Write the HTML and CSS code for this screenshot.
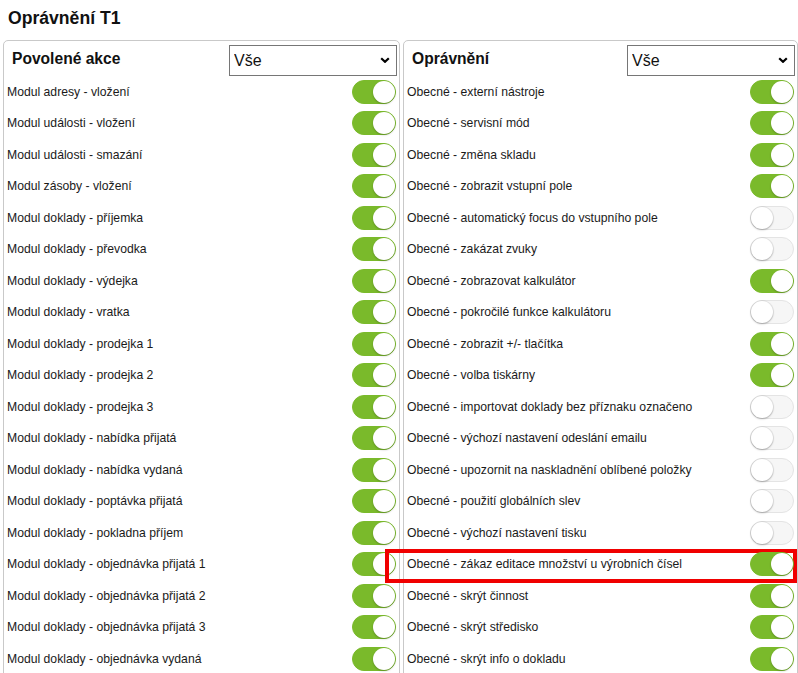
FILE: index.html
```html
<!DOCTYPE html>
<html lang="cs">
<head>
<meta charset="utf-8">
<title>Oprávnění T1</title>
<link rel="stylesheet" href="styles.css">
</head>
<body>
<h1 class="page-title">Oprávnění T1</h1>
<div class="panels">
  <section class="panel panel-left">
    <div class="panel-head">
      <h2 class="panel-title">Povolené akce</h2>
      <select class="filter"><option>Vše</option></select>
    </div>
    <div class="row"><span>Modul adresy - vložení</span><span class="sw on"></span></div>
    <div class="row"><span>Modul události - vložení</span><span class="sw on"></span></div>
    <div class="row"><span>Modul události - smazání</span><span class="sw on"></span></div>
    <div class="row"><span>Modul zásoby - vložení</span><span class="sw on"></span></div>
    <div class="row"><span>Modul doklady - příjemka</span><span class="sw on"></span></div>
    <div class="row"><span>Modul doklady - převodka</span><span class="sw on"></span></div>
    <div class="row"><span>Modul doklady - výdejka</span><span class="sw on"></span></div>
    <div class="row"><span>Modul doklady - vratka</span><span class="sw on"></span></div>
    <div class="row"><span>Modul doklady - prodejka 1</span><span class="sw on"></span></div>
    <div class="row"><span>Modul doklady - prodejka 2</span><span class="sw on"></span></div>
    <div class="row"><span>Modul doklady - prodejka 3</span><span class="sw on"></span></div>
    <div class="row"><span>Modul doklady - nabídka přijatá</span><span class="sw on"></span></div>
    <div class="row"><span>Modul doklady - nabídka vydaná</span><span class="sw on"></span></div>
    <div class="row"><span>Modul doklady - poptávka přijatá</span><span class="sw on"></span></div>
    <div class="row"><span>Modul doklady - pokladna příjem</span><span class="sw on"></span></div>
    <div class="row"><span>Modul doklady - objednávka přijatá 1</span><span class="sw on"></span></div>
    <div class="row"><span>Modul doklady - objednávka přijatá 2</span><span class="sw on"></span></div>
    <div class="row"><span>Modul doklady - objednávka přijatá 3</span><span class="sw on"></span></div>
    <div class="row"><span>Modul doklady - objednávka vydaná</span><span class="sw on"></span></div>
  </section>
  <section class="panel panel-right">
    <div class="panel-head">
      <h2 class="panel-title">Oprávnění</h2>
      <select class="filter"><option>Vše</option></select>
    </div>
    <div class="row"><span>Obecné - externí nástroje</span><span class="sw on"></span></div>
    <div class="row"><span>Obecné - servisní mód</span><span class="sw on"></span></div>
    <div class="row"><span>Obecné - změna skladu</span><span class="sw on"></span></div>
    <div class="row"><span>Obecné - zobrazit vstupní pole</span><span class="sw on"></span></div>
    <div class="row"><span>Obecné - automatický focus do vstupního pole</span><span class="sw"></span></div>
    <div class="row"><span>Obecné - zakázat zvuky</span><span class="sw"></span></div>
    <div class="row"><span>Obecné - zobrazovat kalkulátor</span><span class="sw on"></span></div>
    <div class="row"><span>Obecné - pokročilé funkce kalkulátoru</span><span class="sw"></span></div>
    <div class="row"><span>Obecné - zobrazit +/- tlačítka</span><span class="sw on"></span></div>
    <div class="row"><span>Obecné - volba tiskárny</span><span class="sw on"></span></div>
    <div class="row"><span>Obecné - importovat doklady bez příznaku označeno</span><span class="sw"></span></div>
    <div class="row"><span>Obecné - výchozí nastavení odeslání emailu</span><span class="sw"></span></div>
    <div class="row"><span>Obecné - upozornit na naskladnění oblíbené položky</span><span class="sw"></span></div>
    <div class="row"><span>Obecné - použití globálních slev</span><span class="sw"></span></div>
    <div class="row"><span>Obecné - výchozí nastavení tisku</span><span class="sw"></span></div>
    <div class="row highlighted"><span>Obecné - zákaz editace množství u výrobních čísel</span><span class="sw on"></span></div>
    <div class="row"><span>Obecné - skrýt činnost</span><span class="sw on"></span></div>
    <div class="row"><span>Obecné - skrýt středisko</span><span class="sw on"></span></div>
    <div class="row"><span>Obecné - skrýt info o dokladu</span><span class="sw on"></span></div>
  </section>
</div>
</body>
</html>
```

FILE: styles.css
```css
html, body {
  margin: 0;
  padding: 0;
  background: #ffffff;
  overflow: hidden;
}
body {
  font-family: "Liberation Sans", Arial, sans-serif;
  color: #1a1a1a;
}
.page-title {
  margin: 0;
  padding: 8px 8px 0 8px;
  height: 20px;
  line-height: 20px;
  font-size: 17.6px;
  font-weight: bold;
  color: #111;
  margin-bottom: 12px;
}
.panels {
  display: flex;
  gap: 3px;
  padding-left: 3px;
  align-items: flex-start;
}
.panel {
  box-sizing: border-box;
  border: 1px solid #c9c9c9;
  border-radius: 5px;
  padding-bottom: 40px;
}
.panel-left {
  flex: 0 0 397px;
}
.panel-right {
  flex: 0 0 395px;
}
.panel-head {
  height: 35px;
  display: flex;
  align-items: center;
  justify-content: space-between;
  padding: 0 2px 0 8px;
}
.panel-title {
  margin: 0;
  font-size: 15.6px;
  font-weight: bold;
  color: #111;
  padding-top: 1px;
}
.filter {
  appearance: none;
  -webkit-appearance: none;
  box-sizing: border-box;
  width: 168px;
  height: 31px;
  margin-top: 3px;
  border: 1px solid #767676;
  border-radius: 0;
  padding: 0 0 0 4px;
  font-family: "Liberation Sans", Arial, sans-serif;
  font-size: 16px;
  color: #111;
  background: #fff url("data:image/svg+xml;utf8,<svg xmlns='http://www.w3.org/2000/svg' width='10' height='6' viewBox='0 0 10 6'><path d='M1.2 1.2 L5 4.8 L8.8 1.2' fill='none' stroke='black' stroke-width='2.2'/></svg>") no-repeat right 6px center;
}
.row {
  position: relative;
  height: 31.5px;
  display: flex;
  align-items: center;
  justify-content: space-between;
  padding: 0 3px 0 3px;
  font-size: 12.2px;
}
.sw {
  position: relative;
  box-sizing: border-box;
  width: 44px;
  height: 24px;
  border-radius: 12px;
  background: #f6f6f6;
  border: 1px solid #e4e4e4;
  flex: 0 0 auto;
}
.sw::after {
  content: "";
  position: absolute;
  top: 0;
  left: 0;
  width: 22px;
  height: 22px;
  box-sizing: border-box;
  border-radius: 50%;
  background: #fff;
  box-shadow: 0 1px 2px rgba(0,0,0,0.25), 0 0 0 1px rgba(0,0,0,0.06);
}
.sw.on {
  background: #7aba2b;
  border-color: #7aba2b;
}
.sw.on::after {
  left: auto;
  right: 0;
  box-shadow: 0 1px 2px rgba(0,0,0,0.25);
}
.highlighted::before {
  content: "";
  position: absolute;
  left: -19px;
  top: 0.5px;
  width: 412px;
  height: 34px;
  box-sizing: border-box;
  border: 4px solid #f00000;
  pointer-events: none;
}
```
